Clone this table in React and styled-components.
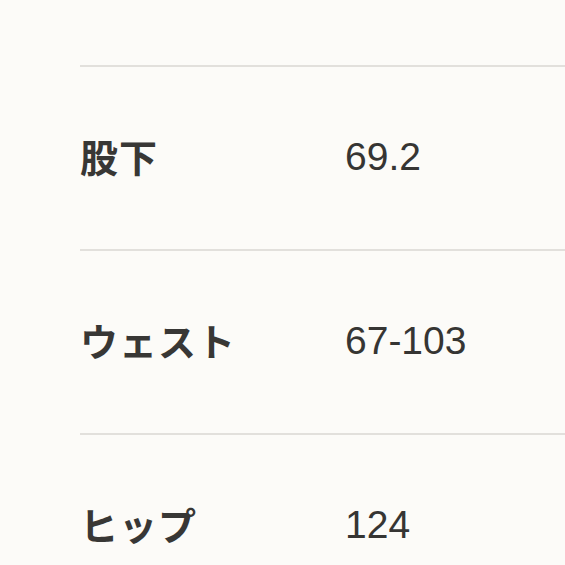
import React from "react";
import styled, { createGlobalStyle } from "styled-components";

const rows = [
  { label: "股下", value: "69.2" },
  { label: "ウェスト", value: "67-103" },
  { label: "ヒップ", value: "124" },
];

function App() {
  return (
    <>
      <GlobalStyle />
      <Page>
        <SizeTable>
          {rows.map((row) => (
            <Row key={row.label}>
              <Label>{row.label}</Label>
              <Value>{row.value}</Value>
            </Row>
          ))}
        </SizeTable>
      </Page>
    </>
  );
}

const GlobalStyle = createGlobalStyle`
  html, body {
    margin: 0;
    padding: 0;
    background: #fcfbf8;
  }
`;

// 페이지
const Page = styled.div`
  width: 565px;
  height: 565px;
  overflow: hidden;
  background: #fcfbf8;
  padding: 65px 0 0 80px;
  box-sizing: border-box;
`;

const SizeTable = styled.div`
  display: flex;
  flex-direction: column;
`;

const Row = styled.div`
  display: flex;
  align-items: center;
  height: 184px;
  padding-bottom: 4px;
  box-sizing: border-box;
  border-top: 2px solid #e2e0dc;
`;

const Label = styled.div`
  width: 265px;
  flex-shrink: 0;
  font-family: "Noto Sans CJK JP", "Noto Sans", sans-serif;
  font-weight: 700;
  font-size: 38px;
  letter-spacing: 1px;
  color: #383735;
  line-height: 1;
`;

const Value = styled.div`
  font-family: "Liberation Sans", Arial, sans-serif;
  font-size: 39px;
  color: #363533;
  line-height: 1;
`;

export default App;
